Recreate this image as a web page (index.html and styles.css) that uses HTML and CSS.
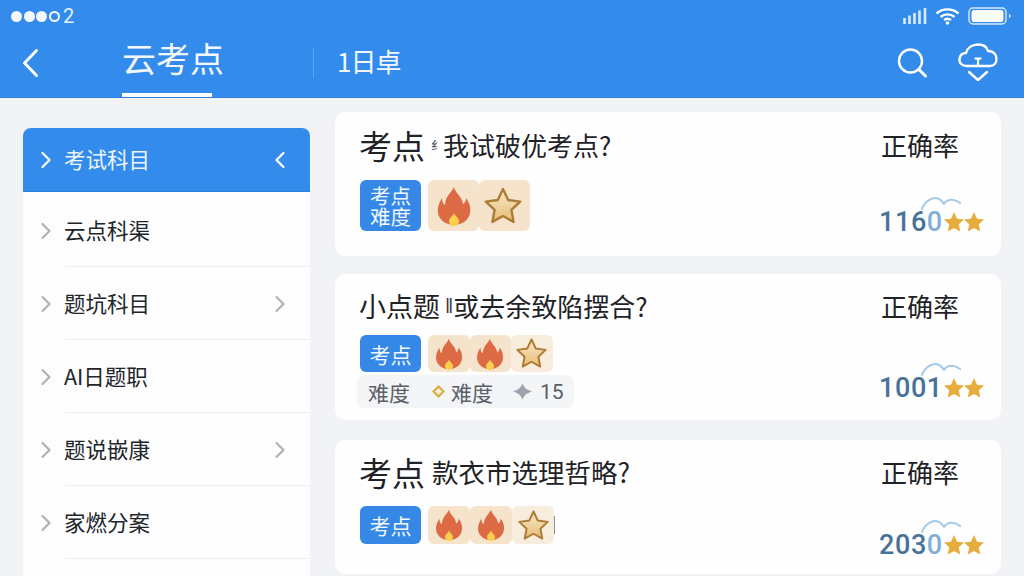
FILE: index.html
```html
<!DOCTYPE html>
<html lang="zh-CN">
<head>
<meta charset="utf-8">
<title>云考点</title>
<link rel="stylesheet" href="styles.css">
</head>
<body>
<svg class="defs" width="0" height="0" aria-hidden="true">
  <defs>
    <linearGradient id="starFill" x1="0" y1="0" x2="0" y2="1">
      <stop offset="0" stop-color="#f6e9cc"/>
      <stop offset="1" stop-color="#e6bd72"/>
    </linearGradient>
    <symbol id="flame" viewBox="0 0 36 40">
      <path d="M18 1c1 6 8 9 9 17 2-1 3-3 3-6 4 5 5 11 4 15-1 7-8 12-16 12S3 34 2 27c-1-5 1-10 4-15 0 3 1 6 3 7 0-8 6-12 9-18z" fill="#dc6a44"/>
      <path d="M18 27c1 3 5 5 5 8 0 3-2 5-5 5s-5-2-5-5c0-3 4-5 5-8z" fill="#f8d04e"/>
    </symbol>
    <symbol id="star" viewBox="0 0 40 40">
      <path d="M20 3l5.200 11 12 1.600-8.800 8.300 2.200 12L20 30l-10.600 5.900 2.200-12-8.800-8.300 12-1.600z" fill="url(#starFill)" stroke="#ad7b35" stroke-width="2.400" stroke-linejoin="round"/>
    </symbol>
    <symbol id="gold" viewBox="0 0 20 20">
      <path d="M10 0l3 6.700 7 .8-5.200 4.800 1.400 7.200L10 15.900l-6.200 3.600 1.400-7.200L0 7.500l7-.8z" fill="#e6ad3c"/>
    </symbol>
    <symbol id="arc" viewBox="0 0 40 14">
      <path d="M1 13C4 5 12 0 18 3c3 1 4 4 5 5 3-5 10-6 16-1" fill="none" stroke="#a3c9ea" stroke-width="2" stroke-linecap="round"/>
    </symbol>
    <symbol id="chev" viewBox="0 0 12 18">
      <path d="M2.500 2l7 7-7 7" fill="none" stroke="currentColor" stroke-width="2.200" stroke-linecap="round" stroke-linejoin="round"/>
    </symbol>
  </defs>
</svg>

<header class="top">
  <div class="status">
    <div class="carrier">
      <i class="dot"></i><i class="dot"></i><i class="dot"></i><i class="dot dot-off"></i><span class="carrier-num">2</span>
    </div>
    <div class="sys">
      <svg class="sys-signal" width="24" height="18" viewBox="0 0 24 18"><path d="M1.500 11v6M6.500 8.500V17M11.500 6v11M16.500 3.500V17M22 1v16" fill="none" stroke="#d9eafc" stroke-width="2.600"/></svg>
      <svg class="sys-wifi" width="25" height="18" viewBox="0 0 25 18"><path d="M1.500 6.500c6-5.500 16-5.500 22 0M5.500 10c4-3.500 10-3.500 14 0M9 13c2-1.500 5-1.500 7 0" fill="none" stroke="#fff" stroke-width="2.400"/><circle cx="12.500" cy="16" r="1.800" fill="#fff"/></svg>
      <svg class="sys-batt" width="44" height="18" viewBox="0 0 44 18"><rect x="1" y="1" width="37" height="16" rx="4" fill="none" stroke="#d9eafc" stroke-width="1.400"/><rect x="3.500" y="3" width="32" height="12" rx="2.500" fill="#fbfbf6"/><path d="M41 6.500l2 2.500-2 2.500z" fill="#d9eafc"/></svg>
    </div>
  </div>
  <nav class="nav">
    <svg class="back" width="18" height="30" viewBox="0 0 18 30"><path d="M14.500 2.500L2.500 15l12 12.500" fill="none" stroke="#fff" stroke-width="3" stroke-linecap="round" stroke-linejoin="round"/></svg>
    <div class="tab">云考点</div>
    <div class="divider"></div>
    <div class="sub">1日卓</div>
    <div class="actions">
      <svg width="31" height="30" viewBox="0 0 31 30"><circle cx="13.500" cy="13" r="11.500" fill="none" stroke="#fff" stroke-width="2.400"/><path d="M22 21.500l6.500 6.500" stroke="#fff" stroke-width="3" stroke-linecap="round"/></svg>
      <svg class="cloud" width="40" height="38" viewBox="0 0 40 38"><path d="M9 23C4 23 1 20 1.500 16 2 12 4.500 10 8 10 9 5 14 1.500 20 1.500 25 1.500 29 4 30 8 35 8 38.500 11 38.500 16 38.500 20 36 23 32 23Z" fill="none" stroke="#fff" stroke-width="2.400" stroke-linejoin="round"/><path d="M16.500 15.500h7M20 15.500V23" stroke="#fff" stroke-width="2.200"/><path d="M11 29l9 8 9-8" fill="none" stroke="#fff" stroke-width="2.400" stroke-linecap="round" stroke-linejoin="round"/></svg>
    </div>
  </nav>
</header>

<main class="content">
  <aside class="side">
    <div class="side-active">
      <svg class="chev" width="12" height="18"><use href="#chev"/></svg>
      <span class="side-label">考试科目</span>
      <svg class="chev chev-end chev-flip" width="12" height="18"><use href="#chev"/></svg>
    </div>
    <div class="side-row side-row-first">
      <svg class="chev" width="12" height="18"><use href="#chev"/></svg>
      <span class="side-label">云点科渠</span>
    </div>
    <div class="side-row">
      <svg class="chev" width="12" height="18"><use href="#chev"/></svg>
      <span class="side-label">题坑科目</span>
      <svg class="chev chev-end" width="12" height="18"><use href="#chev"/></svg>
    </div>
    <div class="side-row">
      <svg class="chev" width="12" height="18"><use href="#chev"/></svg>
      <span class="side-label">AI日题职</span>
    </div>
    <div class="side-row">
      <svg class="chev" width="12" height="18"><use href="#chev"/></svg>
      <span class="side-label">题说嵌康</span>
      <svg class="chev chev-end" width="12" height="18"><use href="#chev"/></svg>
    </div>
    <div class="side-row">
      <svg class="chev" width="12" height="18"><use href="#chev"/></svg>
      <span class="side-label">家燃分案</span>
    </div>
  </aside>

  <section class="cards">
    <article class="card card-a">
      <div class="card-main">
        <h2 class="title"><span class="title-big">考点</span><span class="mark mark-a">纟</span><span class="title-rest">我试破优考点?</span></h2>
        <div class="tags tags-a">
          <span class="tag tag-tall"><span class="tag-line">考点</span><span class="tag-line">难度</span></span>
          <span class="tiles">
            <span class="tile tile-lg"><svg width="38" height="40"><use href="#flame"/></svg></span>
            <span class="tile tile-lg"><svg class="star-a" width="40" height="40"><use href="#star"/></svg></span>
          </span>
        </div>
      </div>
      <div class="card-side">
        <div class="rate">正确率</div>
        <div class="score score-a">
          <span class="num">116<span class="num-light">0</span></span>
          <svg class="arc" width="40" height="14"><use href="#arc"/></svg>
          <svg class="gold" width="20" height="20"><use href="#gold"/></svg><svg class="gold" width="20" height="20"><use href="#gold"/></svg>
        </div>
      </div>
    </article>

    <article class="card card-b">
      <div class="card-main">
        <h2 class="title"><span class="title-mid">小点题</span><span class="mark mark-b">‖</span><span class="title-rest">或去余致陷摆合?</span></h2>
        <div class="tags tags-b">
          <span class="tag tag-b">考点</span>
          <span class="tiles">
            <span class="tile tile-sm"><svg width="32" height="32"><use href="#flame"/></svg></span>
            <span class="tile tile-sm"><svg width="32" height="32"><use href="#flame"/></svg></span>
            <span class="tile tile-sm tile-pale"><svg width="33" height="33"><use href="#star"/></svg></span>
          </span>
        </div>
        <div class="chips">
          <span class="chip-text">难度</span>
          <svg class="chip-diamond" width="13" height="13" viewBox="0 0 13 13"><path d="M6.500 1.500l5 5-5 5-5-5z" fill="#fbf3d8" stroke="#d9a93c" stroke-width="2"/></svg>
          <span class="chip-text">难度</span>
          <svg class="chip-spark" width="19" height="17" viewBox="0 0 19 17"><path d="M9.500 0c1 4 4 7 9.500 8.500-5.500 1.500-8.500 4.500-9.500 8.500-1-4-4-7-9.500-8.500C5.500 7 8.500 4 9.500 0z" fill="#9da3ad"/></svg>
          <span class="chip-text chip-num">15</span>
        </div>
      </div>
      <div class="card-side">
        <div class="rate">正确率</div>
        <div class="score score-b">
          <span class="num">1001</span>
          <svg class="arc" width="40" height="14"><use href="#arc"/></svg>
          <svg class="gold" width="20" height="20"><use href="#gold"/></svg><svg class="gold" width="20" height="20"><use href="#gold"/></svg>
        </div>
      </div>
    </article>

    <article class="card card-c">
      <div class="card-main">
        <h2 class="title"><span class="title-big">考点</span><span class="title-rest title-rest-c">款衣市选理哲略?</span></h2>
        <div class="tags tags-c">
          <span class="tag tag-c">考点</span>
          <span class="tiles">
            <span class="tile tile-md"><svg width="32" height="32"><use href="#flame"/></svg></span>
            <span class="tile tile-md"><svg width="32" height="32"><use href="#flame"/></svg></span>
            <span class="tile tile-md tile-pale"><svg width="33" height="33"><use href="#star"/></svg></span>
          </span>
          <span class="tick"></span>
        </div>
      </div>
      <div class="card-side">
        <div class="rate">正确率</div>
        <div class="score score-c">
          <span class="num">203<span class="num-light">0</span></span>
          <svg class="arc" width="40" height="14"><use href="#arc"/></svg>
          <svg class="gold" width="20" height="20"><use href="#gold"/></svg><svg class="gold" width="20" height="20"><use href="#gold"/></svg>
        </div>
      </div>
    </article>
  </section>
</main>
</body>
</html>
```
FILE: styles.css
```css
* { box-sizing: border-box; }
html, body { margin: 0; height: 576px; overflow: hidden; }
body {
  background: #f2f3f6;
  font-family: "Noto Sans CJK SC", "Noto Sans", sans-serif;
  color: #24272b;
}
.defs { position: absolute; }

/* header */
.top { height: 98px; background: #338bec; color: #fff; display: flex; flex-direction: column; border-bottom: 1px solid #2f7fd8; }
.status { height: 32px; display: flex; justify-content: space-between; padding: 7px 12px 0 11px; }
.carrier { display: flex; align-items: center; gap: 1.500px; height: 18px; }
.dot { width: 11px; height: 11px; border-radius: 50%; background: #f4f8fe; }
.dot-off { background: transparent; border: 2px solid #f4f8fe; }
.carrier-num { font-family: "Roboto", sans-serif; font-size: 20px; line-height: 18px; margin-left: 2px; color: #e5f0fc; }
.sys { display: flex; align-items: flex-start; gap: 8px; }
.nav { flex: 1; display: flex; align-items: center; padding-left: 22px; }
.back { flex: none; margin-top: -4px; }
.tab {
  margin-left: 82px; width: 90px; height: 65px; line-height: 52px;
  font-size: 34px; color: #f4f8fe; white-space: nowrap;
  border-bottom: 4px solid #fff; align-self: flex-start;
}
.divider { width: 1px; height: 30px; background: #5aa2f0; margin-left: 101px; margin-top: -4px; }
.sub { font-size: 26px; line-height: 36px; letter-spacing: -1px; margin-left: 23px; margin-top: -8px; color: #f4f8fe; }
.actions { margin-left: auto; margin-right: 26px; margin-top: -4px; display: flex; align-items: center; gap: 30px; }
.cloud { margin-top: -2px; }

/* layout */
.content { display: flex; align-items: flex-start; padding: 14px 23px 0 23px; gap: 25px; }

/* sidebar */
.side { flex: none; width: 287px; height: 470px; margin-top: 16px; background: #fdfdfe; border-radius: 8px 8px 0 0; }
.side-active {
  height: 64px; display: flex; align-items: center; padding: 0 24px 0 17px;
  background: #338bec; color: #eef5fe; border-radius: 8px 8px 0 0; border-bottom: 1px solid #2f7fd8;
}
.side-row {
  height: 73px; margin-left: 17px; display: flex; align-items: center; padding: 1px 24px 0 0;
  color: #222529;
  background: linear-gradient(#edeef1, #edeef1) 25px 100% / 245px 1px no-repeat;
}
.side-row-first { height: 75px; padding-top: 3px; }
.side .chev { color: #aeb1b6; }
.side-active .chev { color: #fff; }
.chev { flex: none; }
.chev-end { margin-left: auto; }
.chev-flip { transform: scaleX(-1); }
.side-label { margin-left: 12px; margin-bottom: 2px; font-size: 21.500px; line-height: 30px; white-space: nowrap; }

/* cards */
.cards { flex: 1; display: flex; flex-direction: column; }
.card { background: #fefefe; border-radius: 11px; display: flex; justify-content: space-between; padding-left: 25px; padding-right: 16px; }
.card-a { height: 144px; padding-top: 13px; }
.card-b { height: 146px; margin-top: 18px; padding-top: 12px; }
.card-c { height: 134px; margin-top: 20px; padding-top: 12px; }
.card-main { flex: none; }
.title { margin: 0; font-weight: 400; height: 40px; line-height: 40px; display: flex; align-items: center; white-space: nowrap; color: #1f2226; }
.title-big { font-size: 33px; margin-left: -1px; }
.title-mid { font-size: 27px; margin-left: -1px; }
.title-rest { font-size: 26px; }
.title-rest-c { font-size: 26.500px; margin-left: 7px; }
.mark { color: #3a3d42; }
.mark-a { font-size: 12px; margin-left: 6px; }
.mark-b { font-family: "Liberation Sans", sans-serif; font-size: 20px; margin-left: 5px; }

.tags { display: flex; align-items: stretch; gap: 7px; }
.tags-a { margin-top: 15px; height: 51px; }
.tags-b { margin-top: 9px; height: 37px; }
.tags-c { margin-top: 14px; height: 38px; }
.tag {
  width: 61px; background: #3588e6; color: #f3f8fe; border-radius: 6px;
  display: flex; align-items: center; justify-content: center; text-align: center;
  font-size: 21px; line-height: 24px;
}
.tag-tall { flex-direction: column; }
.tag-line { display: block; height: 21px; line-height: 21px; font-size: 20.500px; }
.tiles { display: flex; }
.tile { display: flex; align-items: center; justify-content: center; background: #f5e4cb; border-radius: 6px; }
.tile-lg { width: 51px; }
.tile-sm { width: 41.500px; }
.tile-md { width: 42px; }
.tile-pale { background: #f8eddc; }
.star-a { margin-right: 4px; }
.tick { width: 1px; height: 18px; background: #8c8f94; align-self: center; margin-left: -7px; }

.chips {
  margin-top: 3px; margin-left: -3px; width: 217px; height: 33px; background: #f4f5f7; border-radius: 8px;
  display: flex; align-items: center; padding-left: 11px; color: #5b6068;
}
.chip-text { font-size: 21px; line-height: 28px; }
.chip-diamond { margin-left: 22px; margin-right: 6px; }
.chip-spark { margin-left: 20px; margin-right: 8px; }
.chip-num { font-family: "Roboto", sans-serif; font-size: 21px; }

.card-side { flex: none; width: 105px; display: flex; flex-direction: column; align-items: flex-start; }
.rate { font-size: 26px; line-height: 40px; color: #1f2226; margin-left: 1px; height: 40px; }
.score { position: relative; display: flex; align-items: center; margin-top: auto; margin-left: -1px; height: 34px; }
.score-a { margin-bottom: 17px; }
.score-b { margin-bottom: 15px; }
.score-c { margin-bottom: 12px; }
.num { font-family: "Roboto", sans-serif; font-weight: 500; font-size: 27px; line-height: 34px; letter-spacing: .6px; width: 65px; color: #47729a; }
.num-light { color: #7fb0dc; }
.arc { position: absolute; left: 42px; top: -9px; }
.gold { flex: none; }
```
